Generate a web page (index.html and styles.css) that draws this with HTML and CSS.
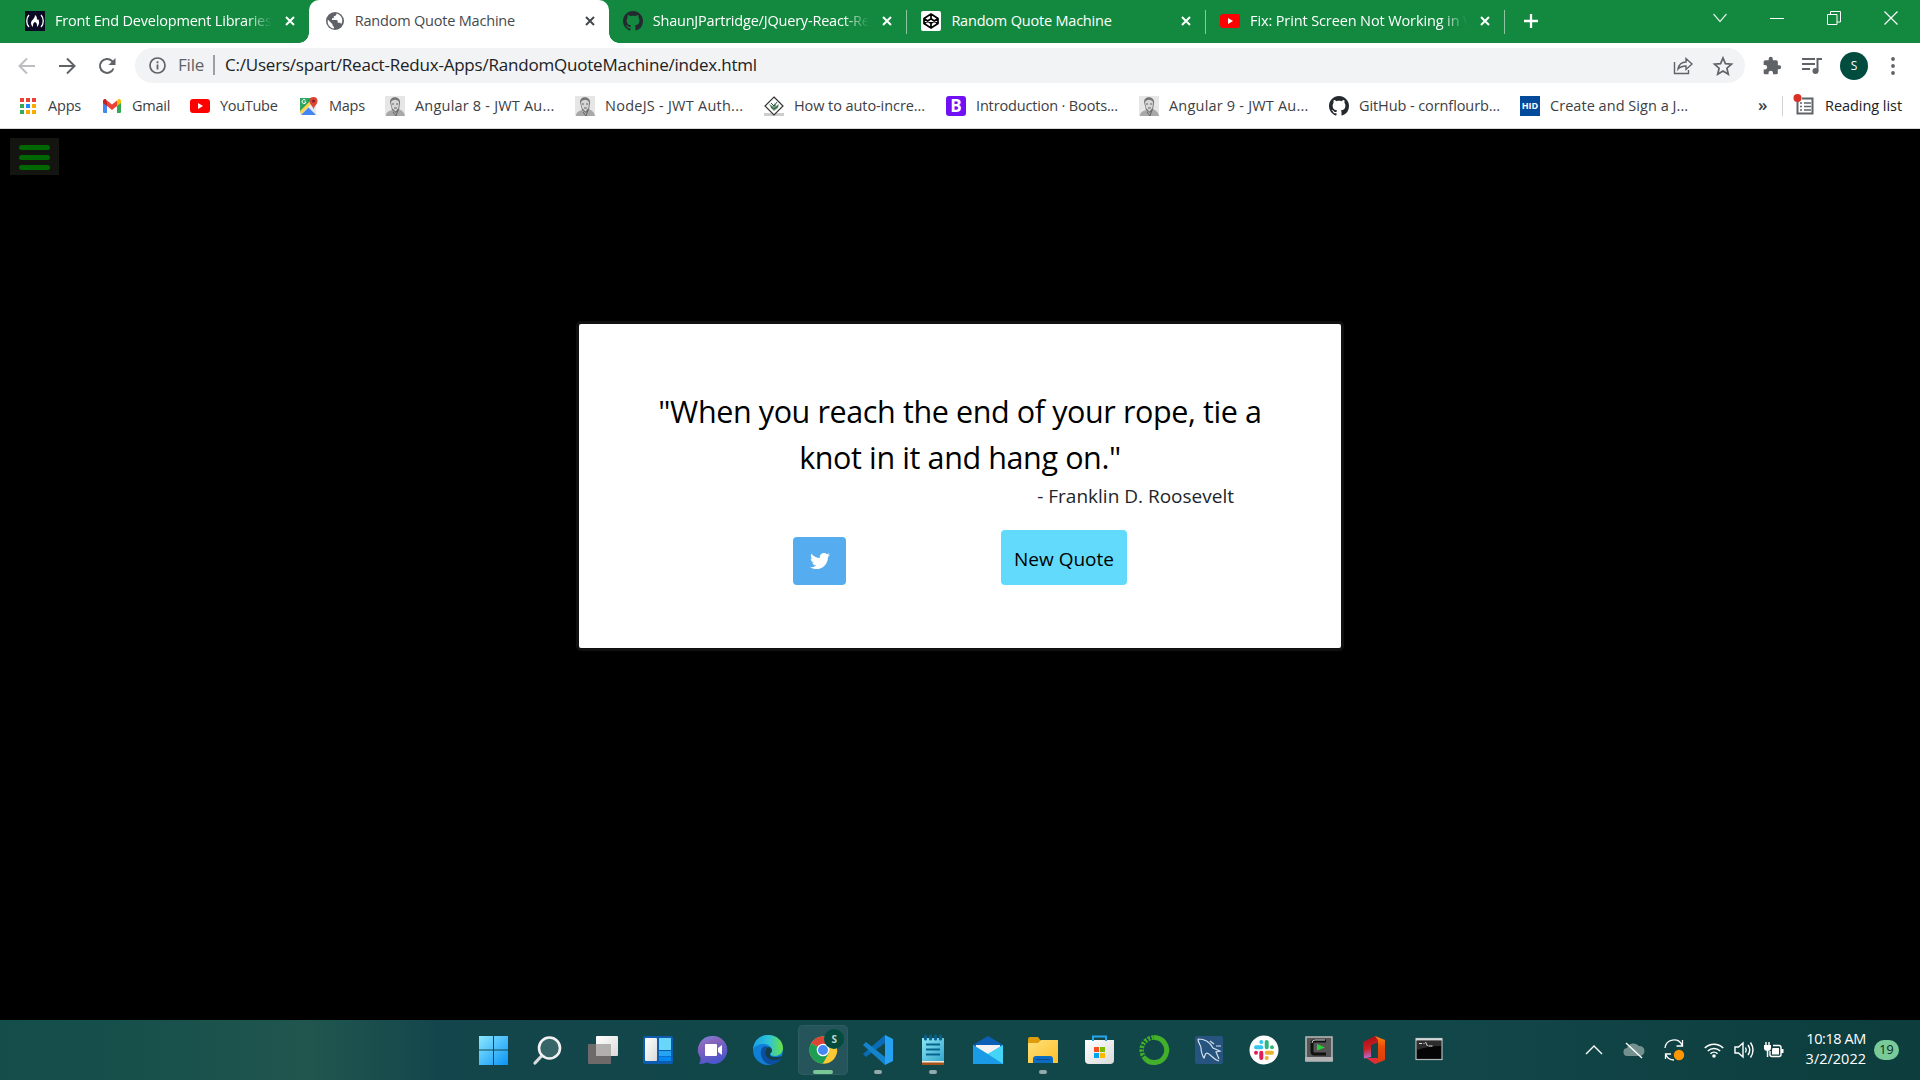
FILE: index.html
```html
<!DOCTYPE html>
<html lang="en">
<head>
<meta charset="utf-8">
<title>Random Quote Machine</title>
<link rel="stylesheet" href="styles.css">
</head>
<body>
<svg class="defs" width="0" height="0" aria-hidden="true">
  <defs>
    <symbol id="x" viewBox="0 0 10 10"><path d="M1 1l8 8M9 1l-8 8" stroke="currentColor" stroke-width="2" fill="none"/></symbol>
    <symbol id="github" viewBox="0 0 16 16"><path fill="#24292f" d="M8 0C3.58 0 0 3.58 0 8c0 3.54 2.29 6.53 5.47 7.59.4.07.55-.17.55-.38 0-.19-.01-.82-.01-1.49-2.01.37-2.53-.49-2.69-.94-.09-.23-.48-.94-.82-1.13-.28-.15-.68-.52-.01-.53.63-.01 1.08.58 1.23.82.72 1.21 1.87.87 2.33.66.07-.52.28-.87.51-1.07-1.78-.2-3.64-.89-3.64-3.95 0-.87.31-1.59.82-2.15-.08-.2-.36-1.02.08-2.12 0 0 .67-.21 2.2.82.64-.18 1.32-.27 2-.27s1.36.09 2 .27c1.53-1.04 2.2-.82 2.2-.82.44 1.1.16 1.92.08 2.12.51.56.82 1.27.82 2.15 0 3.07-1.87 3.75-3.65 3.95.29.25.54.73.54 1.48 0 1.07-.01 1.93-.01 2.2 0 .21.15.46.55.38A8.01 8.01 0 0 0 16 8c0-4.42-3.58-8-8-8z"/></symbol>
    <symbol id="youtube" viewBox="0 0 20 20"><rect y="3" width="20" height="14" rx="3" fill="#f00"/><path d="M8 7l5 3-5 3z" fill="#fff"/></symbol>
    <symbol id="portrait" viewBox="0 0 20 20"><rect width="20" height="20" fill="#e6e6e6"/><path d="M1 20c0-4 3-5 6-6l6-1c4 1 6 3 7 7z" fill="#a8a8a8"/><path d="M5 6c0-7 11-6 10 1l-1 7-3 3-4-3z" fill="#747474"/><path d="M6 6c2-3 6-3 8 0l-.5 6-3 3.500-3.500-3.500z" fill="#d6d6d6"/><path d="M7 8h2M11 8h2M9 12h3M8 16l3 4M13 14l-2 6" stroke="#666" fill="none"/></symbol>
    <linearGradient id="win" x2="1" y2="1"><stop stop-color="#8be8ff"/><stop offset="1" stop-color="#0a93f5"/></linearGradient>
    <linearGradient id="white" x2="1" y2="1"><stop stop-color="#fff"/><stop offset="1" stop-color="#dadada"/></linearGradient>
    <linearGradient id="chat" x2=".4" y2="1"><stop stop-color="#7a86e8"/><stop offset=".35" stop-color="#8765bb"/><stop offset="1" stop-color="#4d55cc"/></linearGradient>
    <linearGradient id="edgetop"><stop stop-color="#1b9ee8"/><stop offset=".55" stop-color="#2fc5d3"/><stop offset="1" stop-color="#6be23e"/></linearGradient>
    <linearGradient id="folder" x2="1" y2="1"><stop stop-color="#ffe07a"/><stop offset="1" stop-color="#fcc12a"/></linearGradient>
    <linearGradient id="note" x2="1" y2="1"><stop stop-color="#8ce7f4"/><stop offset="1" stop-color="#35a5cc"/></linearGradient>
    <linearGradient id="office" x2=".2" y2="1"><stop stop-color="#a30b10"/><stop offset=".6" stop-color="#c82225"/><stop offset="1" stop-color="#b96bd0"/></linearGradient>
    <linearGradient id="officer" y2="1" x2="0"><stop stop-color="#f98613"/><stop offset=".4" stop-color="#e84a08"/><stop offset="1" stop-color="#d93a10"/></linearGradient>
  </defs>
</svg>

<div class="tabstrip">
  <div class="tab">
    <svg class="icon" viewBox="0 0 20 20"><rect width="20" height="20" fill="#0a0a23"/><path d="M4 4c-3 3-3 9 0 12M16 4c3 3 3 9 0 12" stroke="#fff" stroke-width="1.3" fill="none"/><path d="M10 4c0 4-4 5-4 8 0 2 1 3 2 4 0-3 0-4 2-5 2 1 2 2 2 5 2-2 3-5 1-8l-1 1c0-2 0-4-2-5z" fill="#fff"/></svg>
    <span class="label fade">Front End Development Libraries</span>
    <svg class="close"><use href="#x"/></svg>
  </div>
  <div class="tab active">
    <svg class="icon" viewBox="0 0 20 20"><circle cx="10" cy="10" r="9" fill="#5f6368"/><path d="M12 2.500v1.200q0 1.500-1.500 1.500H9v1.500q0 1-1 1H6.500V10H11q1 0 1 1v2.500h1q1.200 0 1.500 1.200l1.500-1.200q3-7-4-11z" fill="#fff" opacity="0"/><path d="M11.500 2.600c0 2-1 2.600-2.700 2.600v2H7V9h4.500c1 0 1.200.8 1.200 1.500v1.300h1.800c1 0 1.400.6 1.600 1.500 2.500-3.500 1.300-9-4.600-10.700zM2.800 8.500l4.700 4.700v1q0 1.200 1.500 1.500v1.800C4.500 17 2 13 2.800 8.500z" fill="#fff"/></svg>
    <span class="label">Random Quote Machine</span>
    <svg class="close"><use href="#x"/></svg>
  </div>
  <div class="tab">
    <svg class="icon"><use href="#github"/></svg>
    <span class="label fade">ShaunJPartridge/JQuery-React-Re</span>
    <svg class="close"><use href="#x"/></svg>
  </div>
  <div class="tab ruled">
    <svg class="icon" viewBox="0 0 20 20"><rect width="20" height="20" rx="2" fill="#fff"/><path d="M10 3l7 4.500v5L10 17l-7-4.500v-5zM3 7.500l7 4.700 7-4.700M3 12.500l7-4.700 7 4.700M10 3v4.800M10 12.200V17" fill="none" stroke="#000" stroke-width="1.7" stroke-linejoin="round"/></svg>
    <span class="label">Random Quote Machine</span>
    <svg class="close"><use href="#x"/></svg>
  </div>
  <div class="tab ruled">
    <svg class="icon"><use href="#youtube"/></svg>
    <span class="label fade tight">Fix: Print Screen Not Working in W</span>
    <svg class="close"><use href="#x"/></svg>
  </div>
  <div class="newtab"><svg width="16" height="16" viewBox="0 0 16 16"><path d="M8 1v14M1 8h14" stroke="#fff" stroke-width="2.300"/></svg></div>
  <div class="winctl">
    <svg width="14" height="10" viewBox="0 0 14 10"><path d="M.5 1L7 8.500 13.500 1" fill="none" stroke="#d7ecdd" stroke-width="1.200"/></svg>
    <svg width="14" height="10" viewBox="0 0 14 10"><path d="M0 5.500h14" stroke="#fff"/></svg>
    <svg width="14" height="14" viewBox="0 0 14 14"><path d="M.5 3.500h9.500v10H.5zM3.500 3.500V.5h10v10.500H10" fill="none" stroke="#fff"/></svg>
    <svg width="14" height="14" viewBox="0 0 14 14"><path d="M.5.5l13 13M13.500.5l-13 13" stroke="#fff" stroke-width="1.200"/></svg>
  </div>
</div>

<div class="toolbar">
  <svg class="nav dim" viewBox="0 0 18 18"><path d="M17 9H2M9 1.500L1.500 9 9 16.500"/></svg>
  <svg class="nav" viewBox="0 0 18 18"><path d="M1 9h15M9 1.500L16.500 9 9 16.500"/></svg>
  <svg class="nav" viewBox="0 0 18 18"><path d="M15.500 11.500A7 7 0 1 1 14 4l2 2"/><path class="solid" d="M17.500 1v7h-7z"/></svg>
  <div class="omnibox">
    <svg width="17" height="17" viewBox="0 0 17 17"><circle cx="8.500" cy="8.500" r="7.500" fill="none" stroke="#5f6368" stroke-width="1.700"/><path d="M8.500 7.500v5M8.500 4.300v1.900" stroke="#5f6368" stroke-width="1.800"/></svg>
    <span class="scheme">File</span>
    <span class="url">C:/Users/spart/React-Redux-Apps/RandomQuoteMachine/index.html</span>
    <svg width="20" height="20" viewBox="0 0 20 20"><path d="M1.500 6v11.500h14V14M5 13c1-5 4-7 8-7V2.500l6 5.500-6 5.500V10c-4 0-6 1-8 3z" fill="none" stroke="#5f6368" stroke-width="1.400"/></svg>
    <svg width="20" height="20" viewBox="0 0 20 20"><path d="M10 2l2.400 5.700 6.100.5-4.600 4 1.400 6L10 15l-5.300 3.200 1.400-6-4.600-4 6.100-.5z" fill="none" stroke="#5f6368" stroke-width="1.700"/></svg>
  </div>
  <svg class="tool" viewBox="0 0 24 24"><path fill="#5f6368" d="M20.500 11H19V7c0-1.100-.9-2-2-2h-4V3.500a2.500 2.500 0 0 0-5 0V5H4c-1.100 0-2 .9-2 2v3.800h1.500a2.700 2.700 0 0 1 0 5.400H2V20c0 1.100.9 2 2 2h3.800v-1.500a2.700 2.700 0 0 1 5.400 0V22H17c1.100 0 2-.9 2-2v-4h1.500a2.500 2.500 0 0 0 0-5z"/></svg>
  <svg class="tool" viewBox="0 0 20 20"><path d="M0 3h13M0 8h13M0 13h8M15.500 15V3H20" fill="none" stroke="#5f6368" stroke-width="2"/><circle cx="13.500" cy="15" r="3" fill="#5f6368"/></svg>
  <span class="avatar">S</span>
  <svg class="dots" viewBox="0 0 4 18"><circle cx="2" cy="2" r="1.900"/><circle cx="2" cy="9" r="1.900"/><circle cx="2" cy="16" r="1.900"/></svg>
</div>

<div class="bookmarks">
  <a class="mark w-apps"><svg class="icon" viewBox="0 0 20 20"><path d="M2 2h4v4H2zM8 2h4v4H8zM14 2h4v4h-4z" fill="#ea4335"/><path d="M2 8h4v4H2zM2 14h4v4H2z" fill="#34a853"/><path d="M8 8h4v4H8z" fill="#1a8cff"/><path d="M14 8h4v4h-4zM8 14h4v4H8zM14 14h4v4h-4z" fill="#f9ab00"/></svg><span>Apps</span></a>
  <a class="mark w-gmail"><svg class="icon" viewBox="0 0 20 20"><path d="M1 6v10q0 1 1 1h3V9z" fill="#4285f4"/><path d="M19 6v10q0 1-1 1h-3V9z" fill="#34a853"/><path d="M15 5v5l4-3V5c0-2-2-2.500-3-1.700z" fill="#fbbc04"/><path d="M1 5v2l4 3V5L4 3.300C3 2.500 1 3 1 5z" fill="#c5221f"/><path d="M5 4.500l5 4 5-4V10l-5 4-5-4z" fill="#ea4335"/></svg><span>Gmail</span></a>
  <a class="mark w-yt"><svg class="icon"><use href="#youtube"/></svg><span>YouTube</span></a>
  <a class="mark w-maps"><svg class="icon" viewBox="0 0 20 20"><rect x="1" y="2" width="16" height="17" rx="1.500" fill="#e8eaed"/><path d="M1 16V3q0-1 1-1h11l-1 5z" fill="#1e9e59"/><path d="M2 19l7.500-7.500L17 19z" fill="#4285f4"/><path d="M1 15l13-13 2 2L2 18.500z" fill="#fdd250"/><path d="M1 14V3q0-1 1-1h10z" fill="#2fa660"/><path d="M6.500 4.200A2 2 0 1 0 7 6H5.300" fill="none" stroke="#fff"/><path d="M14.500 14c0-4-4-5-4-9a4 4 0 0 1 8 0c0 4-4 5-4 9z" fill="#db4437"/><circle cx="14.500" cy="5" r="1.500" fill="#7b231e"/></svg><span>Maps</span></a>
  <a class="mark w-a8"><svg class="icon"><use href="#portrait"/></svg><span>Angular 8 - JWT Au...</span></a>
  <a class="mark w-node"><svg class="icon"><use href="#portrait"/></svg><span>NodeJS - JWT Auth...</span></a>
  <a class="mark w-how"><svg class="icon" viewBox="0 0 20 20"><path d="M0 17h20v3H0z" fill="#ccc"/><path d="M10 1l9 9-9 9-9-9z" fill="#fff" stroke="#333" stroke-width="1.200"/><path d="M5 8l2 4 3 3 4-3 1-4-3 2-1-3-2 3z" fill="#6f9c7e"/><path d="M7 7l3 3 3-4M7 11l3 2 4-3" stroke="#31523e" fill="none"/></svg><span>How to auto-incre...</span></a>
  <a class="mark w-intro"><b class="icon boot">B</b><span>Introduction · Boots...</span></a>
  <a class="mark w-a8"><svg class="icon"><use href="#portrait"/></svg><span>Angular 9 - JWT Au...</span></a>
  <a class="mark w-gh"><svg class="icon"><use href="#github"/></svg><span>GitHub - cornflourb...</span></a>
  <a class="mark w-hid"><b class="icon hid">HID</b><span>Create and Sign a J...</span></a>
  <span class="more">»</span>
  <a class="mark reading"><svg class="icon" viewBox="0 0 20 20"><path d="M2.500 4v13.500h15v-15H7" fill="none" stroke="#5f6368" stroke-width="2"/><path d="M5 7h2M9 7h7M5 10.500h2M9 10.500h7M5 14h2M9 14h7" stroke="#5f6368" stroke-width="1.500"/><circle cx="2.500" cy="2" r="4" fill="#d93025"/></svg><span>Reading list</span></a>
</div>

<main class="page">
  <button class="burger" aria-label="Menu"><i></i><i></i><i></i></button>
  <section class="card">
    <p class="quote">"When you reach the end of your rope, tie a<br>knot in it and hang on."</p>
    <p class="author">- Franklin D. Roosevelt</p>
    <div class="actions">
      <a class="tweet"><svg width="20" height="20" viewBox="0 0 512 512"><path fill="#fff" d="M459.370 151.716c.325 4.548.325 9.097.325 13.645 0 138.720-105.583 298.558-298.558 298.558-59.452 0-114.680-17.219-161.137-47.106 8.447.974 16.568 1.299 25.340 1.299 49.055 0 94.213-16.568 130.274-44.832-46.132-.975-84.792-31.188-98.112-72.772 6.498.974 12.995 1.624 19.818 1.624 9.421 0 18.843-1.300 27.614-3.573-48.081-9.747-84.143-51.980-84.143-102.985v-1.299c13.969 7.797 30.214 12.670 47.431 13.319-28.264-18.843-46.781-51.005-46.781-87.391 0-19.492 5.197-37.360 14.294-52.954 51.655 63.675 129.300 105.258 216.365 109.807-1.624-7.797-2.599-15.918-2.599-24.040 0-57.828 46.782-104.934 104.934-104.934 30.213 0 57.502 12.670 76.670 33.137 23.715-4.548 46.456-13.320 66.599-25.340-7.798 24.366-24.366 44.833-46.132 57.827 21.117-2.273 41.584-8.122 60.426-16.243-14.292 20.791-32.161 39.308-52.628 54.253z"/></svg></a>
      <button class="new">New Quote</button>
    </div>
  </section>
</main>

<footer class="taskbar">
  <div class="apps">
    <span class="app"><svg viewBox="0 0 30 30"><path d="M1 1h14v13.500H1zM16 1h14v13.500H16zM1 15.500h14V30H1zM16 15.500h14V30H16z" fill="url(#win)"/></svg></span>
    <span class="app"><svg viewBox="0 0 30 30"><path d="M9.500 20L2 28" stroke="#d8dcdc" stroke-width="3.200" stroke-linecap="round"/><circle cx="16.500" cy="13" r="10.500" fill="#37666a" stroke="#f2f2f2" stroke-width="2.600"/></svg></span>
    <span class="app"><svg viewBox="0 0 30 30"><rect y="9" width="23" height="20" rx="1" fill="#6d6a69"/><rect x="8" y="1" width="22" height="20" rx="1" fill="url(#white)"/><path d="M8 9h15v12H8z" fill="#b2b0af"/></svg></span>
    <span class="app"><svg viewBox="0 0 30 30"><rect y="1" width="30" height="28" rx="2" fill="#0d5cb0"/><rect x="2" y="3" width="12" height="23" rx="1" fill="url(#white)"/><path d="M16 3h12v12H16z" fill="#69d6fc"/><path d="M16 16h12v5H16z" fill="#26a4f4"/><path d="M16 21.500h12V26H16z" fill="#0487ee"/></svg></span>
    <span class="app"><svg viewBox="0 0 30 30"><path d="M15 1a14 14 0 1 1-6 26.500Q5 29 1 29q2-3 1.500-6A14 14 0 0 1 15 1z" fill="url(#chat)"/><rect x="7" y="9" width="12" height="12" rx="1" fill="#fff"/><path d="M20 13l4-3v10l-4-3z" fill="#fff"/></svg></span>
    <span class="app"><svg viewBox="0 0 30 30"><circle cx="15" cy="15" r="15" fill="#0f7fd8"/><path d="M0 14C1 5 7 0 15 0c9 0 15 6 15 13 0 5-4 8-8 8-3 0-5-1-5-2 0-1 2-2 2-4 0-3-4-6-8-6-5 0-9 2-11 5z" fill="url(#edgetop)"/><path d="M10 12c-5 5-1 17 8 17.500 5 0 9-3 11-7-7 4-16 2-17-6 0-2 1-4 3-4.500-2-1-4-1-5 0z" fill="#0b4f9e"/><path d="M12 17c0-3 2-5 4-5 2 1 3 2 3 4 0 1-2 2-2 4 1 2 5 3 12 1l-2 3c-8 3-15-1-15-7z" fill="#123f4a"/></svg></span>
    <span class="app current"><svg viewBox="0 0 30 30"><circle cx="15" cy="15" r="13.500" fill="#fcc934"/><path d="M15 15L3.300 8.200A13.500 13.500 0 0 1 26.700 8.200z" fill="#dc4437"/><path d="M15 15L3.300 8.200A13.500 13.500 0 0 0 15 28.500l6-10z" fill="#1e9e54"/><path d="M15 9h12.300a13 13 0 0 1-12.300 19.500L21 18z" fill="#fcc934"/><circle cx="15" cy="15" r="6.300" fill="#fff"/><circle cx="15" cy="15" r="5" fill="#4488f4"/></svg><b class="who">S</b></span>
    <span class="app open"><svg viewBox="0 0 30 30"><path d="M3 22l-3-3L22 0v8z" fill="#0a6cb6"/><path d="M0 10l3-3 19 15v8z" fill="#1485cc"/><path d="M22 0l8 4v22l-8 4z" fill="#25a2f1"/></svg></span>
    <span class="app open"><svg viewBox="0 0 30 30"><path d="M4 26h22v4H4z" fill="#a3521a"/><path d="M4 26h22v1.500H4z" fill="#f5ead8"/><path d="M4 3h22v23H4z" fill="url(#note)"/><path d="M7.500 1v3M12.500 1v3M17.500 1v3M22.500 1v3" stroke="#0b5f87" stroke-width="3" stroke-linecap="round"/><path d="M8 9.500h14M8 14.500h14M8 19.500h14" stroke="#06658e" stroke-width="2"/></svg></span>
    <span class="app"><svg viewBox="0 0 30 30"><path d="M0 10L15 1l15 9v8H0z" fill="#0b5eb5"/><path d="M3 10h24v12H3z" fill="#f2f2f2"/><path d="M0 10l15 9 15-9v19H0z" fill="#2eb5f0"/><path d="M15 19l15-9v19z" fill="#43d4f6"/><path d="M0 10l30 19H0z" fill="#1b9be6"/></svg></span>
    <span class="app open"><svg viewBox="0 0 30 30"><path d="M0 8V4q0-2 2-2h8l3 4h6v4H0z" fill="#dd9c0b"/><path d="M0 8h10l3-3h17v23H0z" fill="url(#folder)"/><path d="M5 28v-4q0-3 3-3h14q3 0 3 3v4z" fill="#0c6cc2"/><path d="M8 24.500h14" stroke="#094d91"/></svg></span>
    <span class="app"><svg viewBox="0 0 30 30"><path d="M1 5h29v20q0 4-4 4H5q-4 0-4-4z" fill="url(#white)"/><path d="M9 6V1.500h13V6" fill="none" stroke="#25a7ec" stroke-width="2"/><path d="M10 12h5v5h-5z" fill="#f25022"/><path d="M16 12h5v5h-5z" fill="#7fba00"/><path d="M10 18h5v5h-5z" fill="#00a4ef"/><path d="M16 18h5v5h-5z" fill="#ffb900"/></svg></span>
    <span class="app"><svg viewBox="0 0 30 30"><path d="M15 2.500a12.500 12.500 0 1 1-9 21" fill="none" stroke="#43b02a" stroke-width="5"/><path d="M6 23.500A12.500 12.500 0 0 1 15 2.500" fill="none" stroke="#43b02a" stroke-width="4.500" stroke-dasharray="2.500 1.200"/><path d="M5 21A12 12 0 0 1 13 3" fill="none" stroke="#12474a" stroke-width="1.300" stroke-dasharray="1.500 2"/></svg></span>
    <span class="app"><svg viewBox="0 0 30 30"><rect x="1" y="1" width="28" height="28" rx="2" fill="#26547f"/><path d="M4 4c7 0 12 3 15 9l7 3-4 1 3 7M4 4c0 4 3 6 3 9 0 4 2 9 3 10 1-2 1-5 3-5 4 1 5 6 12 8M16 6l4 3M22 11h5" fill="none" stroke="#d3e1ec" stroke-width="1.200"/></svg></span>
    <span class="app"><svg viewBox="0 0 30 30"><circle cx="15" cy="15" r="14.500" fill="#fff"/><g stroke-width="4" stroke-linecap="round"><path d="M12.300 7v0M7 12.300h5.300" stroke="#36c5f0"/><path d="M17.700 7v5.300M23 12.300v0" stroke="#2eb67d"/><path d="M17.700 17.700H23M17.700 23v0" stroke="#ecb22e"/><path d="M12.300 17.700V23M7 17.700v0" stroke="#e01e5a"/></g></svg></span>
    <span class="app"><svg viewBox="0 0 30 30"><rect x="2" y="2" width="26" height="24" fill="#555" stroke="#bbb" stroke-width="1.500"/><path d="M1 22h28v4H1z" fill="#b4b4b4"/><path d="M22 6H10q-2 0-2 3v7q0 3 2 3h12" fill="none" stroke="#111" stroke-width="3"/><path d="M21 5H11q-3 0-3 3" fill="none" stroke="#ccc"/><path d="M13 9l8 3.500-8 3z" fill="#2ad038"/></svg></span>
    <span class="app"><svg viewBox="0 0 30 30"><path d="M4 7l12-6 4 2v4l-8 3v12l-7 1.500z" fill="url(#office)"/><path d="M16 1l10 4v20l-10 4 3-5V5z" fill="url(#officer)"/><path d="M7 23h12v4l-3 2z" fill="#e32b3a"/></svg></span>
    <span class="app"><svg viewBox="0 0 30 30"><rect x="2" y="3.500" width="26" height="21" fill="#050505" stroke="#b5b9ba" stroke-width="1.200"/><path d="M2 4.500h26" stroke="#d5d8d8" stroke-width="2"/><path d="M3 15q11-4 24-4V6H3z" fill="#2d2d2d"/><path d="M5 8.500h3M9.500 8.500h1M11.500 7l2 4M14.500 11h4" stroke="#ddd"/></svg></span>
  </div>
  <div class="tray">
    <svg width="18" height="12" viewBox="0 0 18 12"><path d="M1 10l8-8 8 8" fill="none" stroke="#fff" stroke-width="1.400"/></svg>
    <svg width="22" height="18" viewBox="0 0 22 18"><path d="M5 15a4 4 0 0 1-1-8 7 7 0 0 1 12-2 5 5 0 0 1 1 10z" fill="#75918f"/><path d="M3 2l16 15" stroke="#fff" stroke-width="1.400"/></svg>
    <svg width="22" height="22" viewBox="0 0 22 22"><path d="M2 9A9 9 0 0 1 19 6M19.500 1v6h-6M2.500 20v-5h5.500M3 16a9 9 0 0 0 8 5" fill="none" stroke="#fff" stroke-width="1.300"/><circle cx="16" cy="16" r="5.200" fill="#ff9500"/></svg>
    <svg width="20" height="16" viewBox="0 0 20 16"><path d="M.8 6a13 13 0 0 1 18.400 0M3.800 9a8.800 8.800 0 0 1 12.400 0M6.500 11.700a5 5 0 0 1 7 0" fill="none" stroke="#fff" stroke-width="1.600"/><circle cx="10" cy="14" r="1.800" fill="#fff"/></svg>
    <svg width="20" height="18" viewBox="0 0 20 18"><path d="M1 6h3.500L9 2v14l-4.500-4H1zM11.500 6.500q1.500 2.500 0 5M14 4q3.500 5 0 10M16.500 1.500q5 7.500 0 15" fill="none" stroke="#fff" stroke-width="1.400"/></svg>
    <svg width="20" height="17" viewBox="0 0 20 17"><path d="M9 3.500h6q2 0 2 2v7q0 2-2 2H8q-2 0-2-2V9" fill="none" stroke="#fff" stroke-width="1.400"/><path d="M8.500 6h6.500v6.500H8V8zM17 7h2.500v4H17zM0 3h7v3q0 3-3.500 3T0 6zM1.300 0h1.400v4H1.300zM4.300 0h1.400v4H4.300zM2.800 8h1.500v7H2.800z" fill="#fff"/></svg>
    <div class="clock"><span class="time">10:18 AM</span><span>3/2/2022</span></div>
    <span class="count">19</span>
  </div>
</footer>
</body>
</html>
```
FILE: styles.css
```css
* { box-sizing: border-box; }
body {
  margin: 0;
  width: 1920px;
  height: 1080px;
  overflow: hidden;
  display: flex;
  flex-direction: column;
  background: #000;
  font: 14.5px/20px "Open Sans", "Noto Sans", sans-serif;
}
svg { display: block; flex: none; overflow: visible; }
.defs { position: absolute; }
.icon { width: 20px; height: 20px; flex: none; }

/* Tabs */
.tabstrip {
  height: 43px;
  flex: none;
  display: flex;
  padding-left: 10px;
  background: #12893f;
  color: #fff;
}
.tab {
  position: relative;
  width: 298.7px;
  height: 43px;
  padding: 0 14px 1px 15px;
  display: flex;
  align-items: center;
  letter-spacing: -.2px;
}
.tab .label {
  width: 218px;
  margin-left: 10px;
  margin-right: 13px;
  padding-bottom: 1px;
  overflow: hidden;
  white-space: nowrap;
}
.tab .fade {
  -webkit-mask-image: linear-gradient(90deg, #000 88%, transparent 100%);
  mask-image: linear-gradient(90deg, #000 88%, transparent 100%);
}
.tab .tight { letter-spacing: -.12px; }
.close { width: 10px; height: 10px; }
.tab.active {
  width: 300px;
  margin-right: -1px;
  padding-left: 16px;
  background: #fff;
  color: #45494d;
  border-radius: 10px 10px 0 0;
}
.tab.active::before, .tab.active::after {
  content: "";
  position: absolute;
  bottom: 0;
  width: 10px;
  height: 10px;
}
.tab.active::before { left: -10px; background: radial-gradient(circle at 0 0, transparent 9.5px, #fff 10px); }
.tab.active::after { right: -10px; background: radial-gradient(circle at 100% 0, transparent 9.5px, #fff 10px); }
.ruled { background: linear-gradient(#8cc7a1, #8cc7a1) 0 10px / 1px 24px no-repeat; }
.newtab {
  display: flex;
  align-items: center;
  padding-left: 19px;
  padding-bottom: 1px;
  background: linear-gradient(#8cc7a1, #8cc7a1) 0 10px / 1px 24px no-repeat;
}
.winctl {
  margin-left: auto;
  display: flex;
  align-items: center;
  height: 36px;
  gap: 43px;
  padding-right: 22px;
}

/* Address row */
.toolbar {
  height: 45px;
  flex: none;
  display: flex;
  align-items: center;
  padding: 0 25px 0 18px;
  background: #fff;
}
.nav { width: 18px; height: 18px; margin-right: 22px; fill: none; stroke: #5f6368; stroke-width: 2; }
.nav .solid { fill: #5f6368; stroke: none; }
.nav.dim { stroke: #bcbec1; }
.omnibox {
  width: 1610px;
  height: 35px;
  margin-left: -3px;
  margin-right: 17px;
  display: flex;
  align-items: center;
  padding: 0 12px 0 14px;
  border-radius: 18px;
  background: #f1f3f4;
  font-size: 17px;
  letter-spacing: -.21px;
}
.omnibox svg + svg { margin-left: 20px; }
.scheme {
  width: 48px;
  margin-left: 12px;
  padding-bottom: 1px;
  background: linear-gradient(#9aa0a6, #9aa0a6) 35px 0 / 2px 20px no-repeat;
  color: #5f6368;
}
.url { flex: 1; margin-left: -1px; padding-bottom: 1px; color: #202124; }
.tool { width: 20px; height: 20px; margin-right: 20px; }
.avatar {
  width: 28px;
  height: 28px;
  margin-right: 23px;
  margin-left: -2px;
  border-radius: 50%;
  background: #004d40;
  color: #fff;
  font-size: 12px;
  line-height: 28px;
  text-align: center;
}
.dots { width: 4px; height: 18px; fill: #5f6368; }

/* Bookmarks */
.bookmarks {
  height: 41px;
  flex: none;
  display: flex;
  align-items: center;
  padding: 0 18px 4px;
  border-bottom: 1px solid #d5d7d9;
  background: #fff;
  color: #3c4043;
  white-space: nowrap;
}
.mark { display: flex; align-items: center; gap: 10px; }
.mark span { padding-bottom: 1px; }
.w-apps { width: 84px; letter-spacing: -.2px; }
.w-gmail { width: 88px; letter-spacing: -.25px; }
.w-yt { width: 109px; letter-spacing: -.3px; }
.w-maps { width: 86px; letter-spacing: -.25px; }
.w-a8 { width: 190px; letter-spacing: .2px; }
.w-node { width: 189px; letter-spacing: .25px; }
.w-how { width: 182px; letter-spacing: -.08px; }
.w-intro { width: 193px; letter-spacing: -.16px; }
.w-gh { width: 191px; letter-spacing: -.09px; }
.w-hid { width: 238px; letter-spacing: .04px; }
.boot {
  border-radius: 3px;
  background: #7011f5;
  color: #fff;
  font-size: 17px;
  letter-spacing: 0;
  text-align: center;
}
.hid {
  background: #034a9b;
  color: #fff;
  font-size: 9px;
  letter-spacing: 0;
  text-align: center;
}
.more {
  width: 25px;
  padding-bottom: 2px;
  font-size: 17px;
  font-weight: 600;
  background: linear-gradient(#d0d2d5, #d0d2d5) 100% 50% / 1px 20px no-repeat;
}
.reading { margin-left: 12px; letter-spacing: -.05px; color: #202124; }

/* Page */
.page {
  flex: 1;
  position: relative;
  padding-top: 195px;
  background: #000;
}
.burger {
  position: absolute;
  left: 10px;
  top: 9px;
  width: 49px;
  height: 37px;
  padding: 1px 9px 0;
  display: flex;
  flex-direction: column;
  justify-content: center;
  gap: 5px;
  border: 0;
  background: #141510;
}
.burger i { height: 5px; border-radius: 3px; background: #006800; }
.card {
  width: 762px;
  height: 324px;
  margin: 0 auto;
  padding: 64px 60px 0;
  border-radius: 2px;
  background: #fff;
  box-shadow: 0 0 0 3px #111;
}
.card p { margin: 0; }
.quote {
  font-size: 30.5px;
  line-height: 46px;
  letter-spacing: -.39px;
  text-align: center;
  color: #000;
  white-space: nowrap;
}
.author {
  padding: 1px 47px 0 0;
  font-size: 19px;
  line-height: 30px;
  text-align: right;
  color: #212529;
}
.actions {
  display: flex;
  align-items: flex-end;
  gap: 155px;
  margin-top: 19px;
  padding-left: 154px;
}
.tweet {
  width: 53px;
  height: 48px;
  display: flex;
  align-items: center;
  justify-content: center;
  border-radius: 4px;
  background: #55acee;
}
.new {
  width: 126px;
  height: 55px;
  padding: 2px 0 0;
  border: 0;
  border-radius: 4px;
  background: #61dafb;
  color: #000;
  font: 19px "Open Sans", "Noto Sans", sans-serif;
}

/* Taskbar */
.taskbar {
  height: 60px;
  flex: none;
  display: flex;
  justify-content: space-between;
  padding: 5px 21px 0 468px;
  background: linear-gradient(90deg, #144d49 0, #174f4b 130px, #20564e 310px, #13464c 440px, #12474a 700px, #12474a 1400px, #0d3d3d 1920px);
}
.apps { display: flex; gap: 5.05px; }
.app {
  position: relative;
  width: 50px;
  height: 50px;
  padding: 10px;
  border-radius: 5px;
}
.app svg { width: 30px; height: 30px; }
.current { background: #25555a; box-shadow: inset 0 0 0 1px #2d5d60; }
.open::after, .current::after {
  content: "";
  position: absolute;
  left: 21px;
  bottom: 1px;
  width: 8px;
  height: 4px;
  border-radius: 2px;
  background: #93a9ab;
}
.current::after { left: 15px; width: 20px; background: #78c796; }
.who {
  position: absolute;
  left: 26px;
  top: 4px;
  width: 20px;
  height: 20px;
  border-radius: 50%;
  background: #024b3e;
  color: #c4d3d0;
  font-size: 10px;
  text-align: center;
}
.tray {
  display: flex;
  align-items: center;
  height: 50px;
  color: #fff;
}
.tray svg:nth-of-type(1) { margin-right: 20px; }
.tray svg:nth-of-type(2) { margin-right: 18px; }
.tray svg:nth-of-type(3) { margin-right: 19px; }
.tray svg:nth-of-type(4), .tray svg:nth-of-type(5) { margin-right: 10px; }
.clock {
  width: 82px;
  padding-bottom: 2px;
  display: flex;
  flex-direction: column;
  align-items: flex-end;
}
.time { letter-spacing: -.4px; }
.count {
  width: 25px;
  height: 20px;
  margin-left: 8px;
  border-radius: 10px;
  background: #78cb98;
  color: #10281c;
  font-size: 12.5px;
  text-align: center;
}
```
